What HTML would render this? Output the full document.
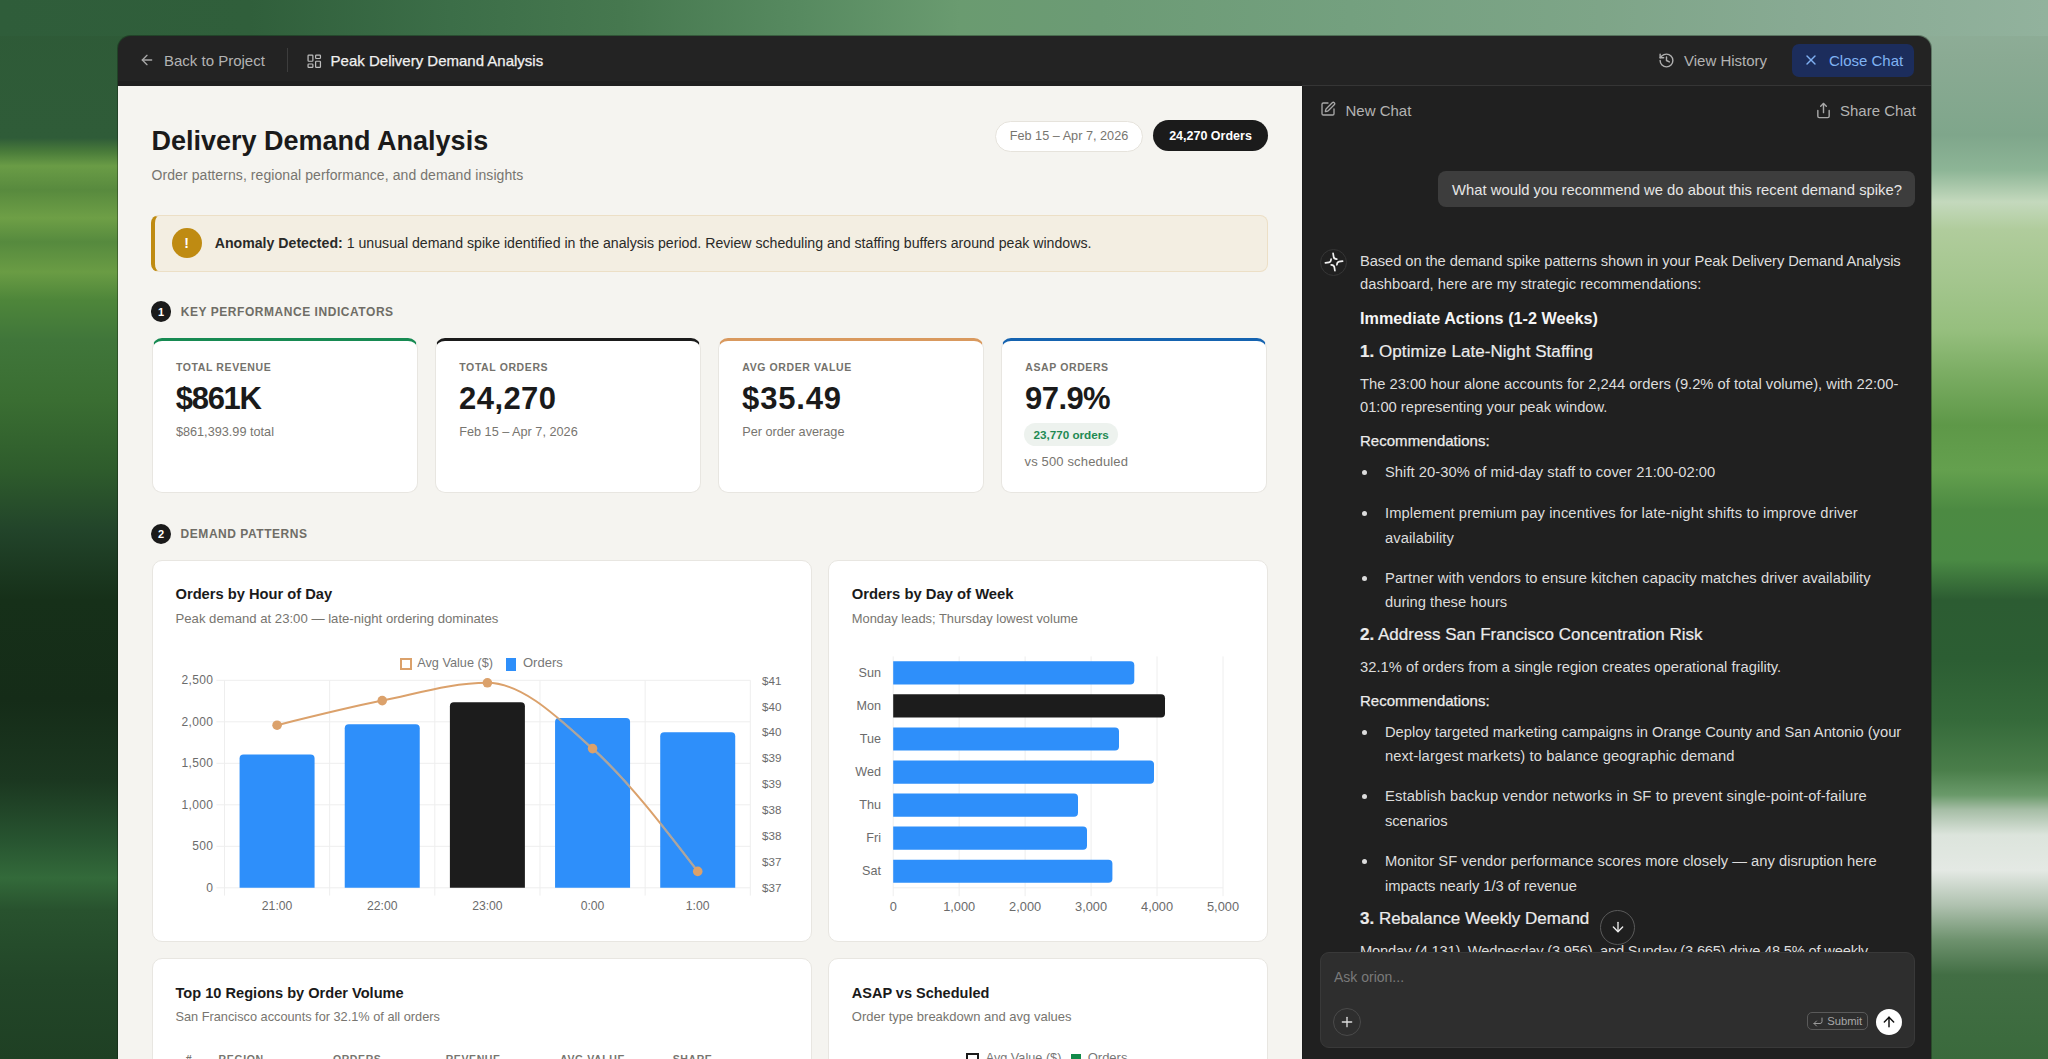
<!DOCTYPE html>
<html><head><meta charset="utf-8"><title>Delivery Demand Analysis</title>
<style>
html,body{margin:0;padding:0;}
body{width:2048px;height:1059px;overflow:hidden;position:relative;font-family:"Liberation Sans", sans-serif;background:#2f5d3a;}
.t{position:absolute;white-space:nowrap;}
.b{position:absolute;}
b{font-weight:700;}
</style></head><body>
<div class="b" style="left:0.00px;top:0.00px;width:150.00px;height:1059.00px;background:linear-gradient(180deg,#2e5a37 0px,#2f5c38 138px,#4a7c3a 152px,#6a9c46 166px,#588a3e 190px,#6e9f46 218px,#568a3e 242px,#6a9c44 272px,#4e863a 300px,#40763a 340px,#3a6e32 400px,#2e5c2c 470px,#22442a 530px,#163019 600px,#152c18 700px,#1b3720 780px,#275430 840px,#336a3a 878px,#28522e 910px,#224628 980px,#1f4024 1059px);"></div>
<div class="b" style="left:1880.00px;top:0.00px;width:168.00px;height:1059.00px;background:linear-gradient(180deg,#92b09b 0px,#8aaa93 60px,#7fa68b 135px,#8db596 170px,#c4d9bd 202px,#b0cc9c 230px,#a4c68e 280px,#96bf7e 330px,#7aac62 375px,#5e9848 425px,#64a04e 470px,#4c8a42 510px,#4a8a44 560px,#2c5c32 600px,#2c5e33 660px,#356a3a 720px,#4a7e4a 770px,#6a9a6a 795px,#a6bea6 810px,#dce4dc 835px,#e4e9e4 870px,#b0c2b0 905px,#6e926e 940px,#426e44 975px,#3a6a3c 1059px);"></div>
<div class="b" style="left:0.00px;top:0.00px;width:2048.00px;height:36.00px;background:linear-gradient(90deg,#2f5d3a 0px,#305f3b 250px,#3c6e48 450px,#46784f 620px,#578a60 800px,#6a9b70 960px,#6c9b75 1100px,#74a07f 1350px,#7ea588 1600px,#88aa93 1800px,#92b29d 2048px);"></div>
<div class="b" style="left:118.00px;top:36.00px;width:1813.00px;height:1023.00px;background:#232323;border-radius:13px 13px 0 0;box-shadow:0 0 0 1px rgba(10,20,10,0.35);"></div>
<div class="b" style="left:118.00px;top:81.00px;width:1184.00px;height:5.00px;background:#1f1f1f;"></div>
<div class="b" style="left:118.00px;top:86.00px;width:1184.00px;height:973.00px;background:#f5f4f0;"></div>
<div class="b" style="left:1302.00px;top:85.00px;width:629.00px;height:974.00px;background:#202020;border-top:1px solid #353535;box-sizing:border-box;"></div>
<div class="b" style="left:1302.00px;top:86.00px;width:1.00px;height:973.00px;background:#1a1a1a;"></div>
<svg class="b" style="left:139px;top:52px;" width="16" height="16" viewBox="0 0 24 24" fill="none" stroke-linecap="round" stroke-linejoin="round"><path d="m12 19-7-7 7-7" stroke="#a8a8a8" stroke-width="2"/><path d="M19 12H5" stroke="#a8a8a8" stroke-width="2"/></svg>
<div class="t" style="left:164.00px;top:51.20px;font-size:15px;line-height:19px;color:#b3b3b3;">Back to Project</div>
<div class="b" style="left:287.00px;top:48.00px;width:1.00px;height:24.00px;background:#3d3d3d;"></div>
<svg class="b" style="left:305.5px;top:52.5px;" width="16.5" height="16.5" viewBox="0 0 24 24" fill="none" stroke-linecap="round" stroke-linejoin="round"><g stroke="#bdbdbd" stroke-width="1.8"><rect x="3" y="3" width="7" height="9" rx="1"/><rect x="14" y="3" width="7" height="5" rx="1"/><rect x="14" y="12" width="7" height="9" rx="1"/><rect x="3" y="16" width="7" height="5" rx="1"/></g></svg>
<div class="t" style="left:330.60px;top:51.00px;font-size:15px;line-height:19px;color:#f0f0f0;-webkit-text-stroke:0.25px #f0f0f0;">Peak Delivery Demand Analysis</div>
<svg class="b" style="left:1658px;top:52px;" width="17" height="17" viewBox="0 0 24 24" fill="none" stroke-linecap="round" stroke-linejoin="round"><g stroke="#b0b0b0" stroke-width="2"><path d="M3 12a9 9 0 1 0 9-9 9.75 9.75 0 0 0-6.74 2.74L3 8"/><path d="M3 3v5h5"/><path d="M12 7v5l4 2"/></g></svg>
<div class="t" style="left:1684.00px;top:51.20px;font-size:15px;line-height:19px;color:#b3b3b3;">View History</div>
<div class="b" style="left:1792.00px;top:44.00px;width:122.00px;height:33.00px;background:#1c2d5c;border-radius:7px;"></div>
<svg class="b" style="left:1803px;top:52px;" width="16" height="16" viewBox="0 0 24 24" fill="none" stroke-linecap="round" stroke-linejoin="round"><g stroke="#7fb0f2" stroke-width="2"><path d="M18 6 6 18"/><path d="m6 6 12 12"/></g></svg>
<div class="t" style="left:1829.00px;top:51.20px;font-size:15px;line-height:19px;color:#80b3f3;">Close Chat</div>
<div class="t" style="left:151.50px;top:123.64px;font-size:27px;line-height:34px;color:#1a1a1a;font-weight:700;">Delivery Demand Analysis</div>
<div class="t" style="left:151.50px;top:165.85px;font-size:14px;line-height:18px;color:#77756f;letter-spacing:0.080px;">Order patterns, regional performance, and demand insights</div>
<div class="b" style="left:995.00px;top:120.50px;width:148.00px;height:31.00px;background:#fff;border:1px solid #e6e3dc;border-radius:16px;box-sizing:border-box;"></div>
<div class="t" style="left:769.00px;width:600px;text-align:center;top:127.60px;font-size:12.7px;line-height:16px;color:#77756f;">Feb 15 – Apr 7, 2026</div>
<div class="b" style="left:1153.00px;top:120.30px;width:115.00px;height:31.00px;background:#1b1b1b;border-radius:16px;"></div>
<div class="t" style="left:910.50px;width:600px;text-align:center;top:127.67px;font-size:12.5px;line-height:16px;color:#ffffff;font-weight:700;">24,270 Orders</div>
<div class="b" style="left:151.00px;top:215.00px;width:1117.00px;height:57.00px;background:#f3eee2;border:1px solid #ecdfc6;border-left:4px solid #bf8b12;border-radius:8px;box-sizing:border-box;"></div>
<div class="b" style="left:171.50px;top:228.00px;width:30.00px;height:30.00px;background:#bf8b12;border-radius:50%;"></div>
<div class="t" style="left:-113.50px;width:600px;text-align:center;top:234.15px;font-size:14px;line-height:18px;color:#ffffff;font-weight:700;">!</div>
<div class="t" style="left:214.70px;top:234.30px;font-size:14.15px;line-height:18px;color:#2a2a28;"><b>Anomaly Detected:</b> 1 unusual demand spike identified in the analysis period. Review scheduling and staffing buffers around peak windows.</div>
<div class="b" style="left:150.80px;top:301.40px;width:20.60px;height:20.60px;background:#1a1a1a;border-radius:50%;"></div>
<div class="t" style="left:-138.90px;width:600px;text-align:center;top:304.79px;font-size:11px;line-height:14px;color:#fff;font-weight:700;">1</div>
<div class="t" style="left:180.70px;top:304.74px;font-size:12px;line-height:15px;color:#6f6d66;font-weight:700;letter-spacing:0.550px;">KEY PERFORMANCE INDICATORS</div>
<div class="b" style="left:151.50px;top:337.50px;width:266.50px;height:155.50px;background:#fff;border:1px solid #e8e6e1;border-top:3.5px solid #178a52;border-radius:10px;box-sizing:border-box;"></div>
<div class="t" style="left:176.00px;top:360.76px;font-size:10.5px;line-height:13px;color:#74726c;font-weight:700;letter-spacing:0.600px;">TOTAL REVENUE</div>
<div class="t" style="left:175.80px;top:379.26px;font-size:31px;line-height:39px;color:#1a1a1a;font-weight:700;letter-spacing:-1.300px;">$861K</div>
<div class="t" style="left:175.90px;top:424.20px;font-size:12.7px;line-height:16px;color:#77756f;">$861,393.99 total</div>
<div class="b" style="left:434.80px;top:337.50px;width:266.50px;height:155.50px;background:#fff;border:1px solid #e8e6e1;border-top:3.5px solid #1b1b1b;border-radius:10px;box-sizing:border-box;"></div>
<div class="t" style="left:459.30px;top:360.76px;font-size:10.5px;line-height:13px;color:#74726c;font-weight:700;letter-spacing:0.600px;">TOTAL ORDERS</div>
<div class="t" style="left:459.10px;top:379.26px;font-size:31px;line-height:39px;color:#1a1a1a;font-weight:700;letter-spacing:0.400px;">24,270</div>
<div class="t" style="left:459.20px;top:424.20px;font-size:12.7px;line-height:16px;color:#77756f;">Feb 15 – Apr 7, 2026</div>
<div class="b" style="left:717.80px;top:337.50px;width:266.50px;height:155.50px;background:#fff;border:1px solid #e8e6e1;border-top:3.5px solid #d9995e;border-radius:10px;box-sizing:border-box;"></div>
<div class="t" style="left:742.30px;top:360.76px;font-size:10.5px;line-height:13px;color:#74726c;font-weight:700;letter-spacing:0.600px;">AVG ORDER VALUE</div>
<div class="t" style="left:742.10px;top:379.26px;font-size:31px;line-height:39px;color:#1a1a1a;font-weight:700;letter-spacing:0.800px;">$35.49</div>
<div class="t" style="left:742.20px;top:424.20px;font-size:12.7px;line-height:16px;color:#77756f;">Per order average</div>
<div class="b" style="left:1000.80px;top:337.50px;width:266.50px;height:155.50px;background:#fff;border:1px solid #e8e6e1;border-top:3.5px solid #1563b0;border-radius:10px;box-sizing:border-box;"></div>
<div class="t" style="left:1025.30px;top:360.76px;font-size:10.5px;line-height:13px;color:#74726c;font-weight:700;letter-spacing:0.600px;">ASAP ORDERS</div>
<div class="t" style="left:1025.10px;top:379.26px;font-size:31px;line-height:39px;color:#1a1a1a;font-weight:700;letter-spacing:-0.600px;">97.9%</div>
<div class="b" style="left:1024.20px;top:423.40px;width:93.80px;height:23.10px;background:#edf2ee;border-radius:12px;"></div>
<div class="t" style="left:771.10px;width:600px;text-align:center;top:427.45px;font-size:11.7px;line-height:15px;color:#1f8a53;font-weight:700;">23,770 orders</div>
<div class="t" style="left:1024.50px;top:454.10px;font-size:13px;line-height:16px;color:#77756f;letter-spacing:0.150px;">vs 500 scheduled</div>
<div class="b" style="left:150.80px;top:523.70px;width:20.60px;height:20.60px;background:#1a1a1a;border-radius:50%;"></div>
<div class="t" style="left:-138.90px;width:600px;text-align:center;top:527.19px;font-size:11px;line-height:14px;color:#fff;font-weight:700;">2</div>
<div class="t" style="left:180.60px;top:526.64px;font-size:12px;line-height:15px;color:#6f6d66;font-weight:700;letter-spacing:0.540px;">DEMAND PATTERNS</div>
<div class="b" style="left:151.50px;top:560.00px;width:660.50px;height:382.00px;background:#fff;border:1px solid #e8e6e1;border-radius:10px;box-sizing:border-box;"></div>
<div class="b" style="left:827.50px;top:560.00px;width:440.50px;height:382.00px;background:#fff;border:1px solid #e8e6e1;border-radius:10px;box-sizing:border-box;"></div>
<div class="b" style="left:151.50px;top:958.00px;width:660.50px;height:142.00px;background:#fff;border:1px solid #e8e6e1;border-radius:10px;box-sizing:border-box;"></div>
<div class="b" style="left:827.50px;top:958.00px;width:440.50px;height:142.00px;background:#fff;border:1px solid #e8e6e1;border-radius:10px;box-sizing:border-box;"></div>
<div class="t" style="left:175.50px;top:585.21px;font-size:14.7px;line-height:18px;color:#1a1a1a;font-weight:700;">Orders by Hour of Day</div>
<div class="t" style="left:175.50px;top:610.74px;font-size:13.15px;line-height:16px;color:#77756f;">Peak demand at 23:00 — late-night ordering dominates</div>
<div class="t" style="left:851.80px;top:585.17px;font-size:14.8px;line-height:18px;color:#1a1a1a;font-weight:700;">Orders by Day of Week</div>
<div class="t" style="left:851.80px;top:610.83px;font-size:12.9px;line-height:16px;color:#77756f;">Monday leads; Thursday lowest volume</div>
<div class="t" style="left:175.50px;top:983.54px;font-size:14.6px;line-height:18px;color:#1a1a1a;font-weight:700;">Top 10 Regions by Order Volume</div>
<div class="t" style="left:175.50px;top:1009.08px;font-size:12.76px;line-height:16px;color:#77756f;">San Francisco accounts for 32.1% of all orders</div>
<div class="t" style="left:851.80px;top:983.58px;font-size:14.5px;line-height:18px;color:#1a1a1a;font-weight:700;">ASAP vs Scheduled</div>
<div class="t" style="left:851.80px;top:1009.00px;font-size:13px;line-height:16px;color:#77756f;">Order type breakdown and avg values</div>
<div class="t" style="left:185.80px;top:1052.86px;font-size:10.5px;line-height:13px;color:#77756f;font-weight:700;letter-spacing:0.600px;">#</div>
<div class="t" style="left:218.60px;top:1052.86px;font-size:10.5px;line-height:13px;color:#77756f;font-weight:700;letter-spacing:0.600px;">REGION</div>
<div class="t" style="left:332.90px;top:1052.86px;font-size:10.5px;line-height:13px;color:#77756f;font-weight:700;letter-spacing:0.600px;">ORDERS</div>
<div class="t" style="left:445.70px;top:1052.86px;font-size:10.5px;line-height:13px;color:#77756f;font-weight:700;letter-spacing:0.600px;">REVENUE</div>
<div class="t" style="left:560.00px;top:1052.86px;font-size:10.5px;line-height:13px;color:#77756f;font-weight:700;letter-spacing:0.600px;">AVG VALUE</div>
<div class="t" style="left:672.70px;top:1052.86px;font-size:10.5px;line-height:13px;color:#77756f;font-weight:700;letter-spacing:0.600px;">SHARE</div>
<div class="b" style="left:966.30px;top:1052.70px;width:12.40px;height:12.30px;border:2px solid #1a1a1a;box-sizing:border-box;"></div>
<div class="t" style="left:985.70px;top:1050.10px;font-size:12.7px;line-height:16px;color:#777;">Avg Value ($)</div>
<div class="b" style="left:1071.00px;top:1053.80px;width:9.70px;height:11.20px;background:#128a4a;"></div>
<div class="t" style="left:1087.70px;top:1050.00px;font-size:13px;line-height:16px;color:#777;">Orders</div>
<svg class="b" style="left:0;top:0" width="2048" height="1059" viewBox="0 0 2048 1059"><line x1="216.4" y1="887.8" x2="750.3" y2="887.8" stroke="#eeeeee" stroke-width="1"/><line x1="216.4" y1="846.3" x2="750.3" y2="846.3" stroke="#eeeeee" stroke-width="1"/><line x1="216.4" y1="804.8" x2="750.3" y2="804.8" stroke="#eeeeee" stroke-width="1"/><line x1="216.4" y1="763.3" x2="750.3" y2="763.3" stroke="#eeeeee" stroke-width="1"/><line x1="216.4" y1="721.8" x2="750.3" y2="721.8" stroke="#eeeeee" stroke-width="1"/><line x1="216.4" y1="680.3" x2="750.3" y2="680.3" stroke="#eeeeee" stroke-width="1"/><line x1="224.5" y1="680.3" x2="224.5" y2="895.6" stroke="#eeeeee" stroke-width="1"/><line x1="329.65999999999997" y1="680.3" x2="329.65999999999997" y2="895.6" stroke="#eeeeee" stroke-width="1"/><line x1="434.82" y1="680.3" x2="434.82" y2="895.6" stroke="#eeeeee" stroke-width="1"/><line x1="539.98" y1="680.3" x2="539.98" y2="895.6" stroke="#eeeeee" stroke-width="1"/><line x1="645.14" y1="680.3" x2="645.14" y2="895.6" stroke="#eeeeee" stroke-width="1"/><line x1="750.3" y1="680.3" x2="750.3" y2="895.6" stroke="#eeeeee" stroke-width="1"/><path d="M239.57999999999998,887.8 L239.57999999999998,758.5 Q239.57999999999998,754.5 243.57999999999998,754.5 L310.58,754.5 Q314.58,754.5 314.58,758.5 L314.58,887.8 Z" fill="#2e8ffa"/><path d="M344.74,887.8 L344.74,728.2 Q344.74,724.2 348.74,724.2 L415.74,724.2 Q419.74,724.2 419.74,728.2 L419.74,887.8 Z" fill="#2e8ffa"/><path d="M449.9,887.8 L449.9,706.3 Q449.9,702.3 453.9,702.3 L520.9,702.3 Q524.9,702.3 524.9,706.3 L524.9,887.8 Z" fill="#1c1c1c"/><path d="M555.06,887.8 L555.06,722 Q555.06,718 559.06,718 L626.06,718 Q630.06,718 630.06,722 L630.06,887.8 Z" fill="#2e8ffa"/><path d="M660.22,887.8 L660.22,736.2 Q660.22,732.2 664.22,732.2 L731.22,732.2 Q735.22,732.2 735.22,736.2 L735.22,887.8 Z" fill="#2e8ffa"/><defs><clipPath id="bc"><rect x="239.57999999999998" y="754.5" width="75" height="133.29999999999995"/><rect x="344.74" y="724.2" width="75" height="163.5999999999999"/><rect x="449.9" y="702.3" width="75" height="185.5"/><rect x="555.06" y="718" width="75" height="169.79999999999995"/><rect x="660.22" y="732.2" width="75" height="155.5999999999999"/></clipPath></defs><path d="M277.08,725.20 C312.13,716.43 347.19,707.67 382.24,700.60 C417.29,693.53 452.35,682.80 487.40,682.80 C522.45,682.80 557.51,717.17 592.56,748.60 C627.61,780.03 662.67,825.72 697.72,871.40" fill="none" stroke="#dba16b" stroke-width="2"/><path d="M277.08,725.20 C312.13,716.43 347.19,707.67 382.24,700.60 C417.29,693.53 452.35,682.80 487.40,682.80 C522.45,682.80 557.51,717.17 592.56,748.60 C627.61,780.03 662.67,825.72 697.72,871.40" fill="none" stroke="#a9a6a3" stroke-width="2" clip-path="url(#bc)"/><circle cx="277.08" cy="725.2" r="4.8" fill="#dba16b"/><circle cx="382.24" cy="700.6" r="4.8" fill="#dba16b"/><circle cx="487.4" cy="682.8" r="4.8" fill="#dba16b"/><circle cx="592.56" cy="748.6" r="4.8" fill="#dba16b"/><circle cx="697.72" cy="871.4" r="4.8" fill="#dba16b"/></svg>
<div class="t" style="right:1834.90px;text-align:right;top:880.54px;font-size:12px;line-height:15px;color:#6b6b6b;letter-spacing:0.300px;">0</div>
<div class="t" style="right:1834.90px;text-align:right;top:839.04px;font-size:12px;line-height:15px;color:#6b6b6b;letter-spacing:0.300px;">500</div>
<div class="t" style="right:1834.90px;text-align:right;top:797.54px;font-size:12px;line-height:15px;color:#6b6b6b;letter-spacing:0.300px;">1,000</div>
<div class="t" style="right:1834.90px;text-align:right;top:756.04px;font-size:12px;line-height:15px;color:#6b6b6b;letter-spacing:0.300px;">1,500</div>
<div class="t" style="right:1834.90px;text-align:right;top:714.54px;font-size:12px;line-height:15px;color:#6b6b6b;letter-spacing:0.300px;">2,000</div>
<div class="t" style="right:1834.90px;text-align:right;top:673.04px;font-size:12px;line-height:15px;color:#6b6b6b;letter-spacing:0.300px;">2,500</div>
<div class="t" style="left:762.00px;top:673.58px;font-size:11.6px;line-height:14px;color:#6b6b6b;">$41</div>
<div class="t" style="left:762.00px;top:699.52px;font-size:11.6px;line-height:14px;color:#6b6b6b;">$40</div>
<div class="t" style="left:762.00px;top:725.46px;font-size:11.6px;line-height:14px;color:#6b6b6b;">$40</div>
<div class="t" style="left:762.00px;top:751.40px;font-size:11.6px;line-height:14px;color:#6b6b6b;">$39</div>
<div class="t" style="left:762.00px;top:777.34px;font-size:11.6px;line-height:14px;color:#6b6b6b;">$39</div>
<div class="t" style="left:762.00px;top:803.28px;font-size:11.6px;line-height:14px;color:#6b6b6b;">$38</div>
<div class="t" style="left:762.00px;top:829.22px;font-size:11.6px;line-height:14px;color:#6b6b6b;">$38</div>
<div class="t" style="left:762.00px;top:855.16px;font-size:11.6px;line-height:14px;color:#6b6b6b;">$37</div>
<div class="t" style="left:762.00px;top:881.10px;font-size:11.6px;line-height:14px;color:#6b6b6b;">$37</div>
<div class="t" style="left:-22.92px;width:600px;text-align:center;top:899.27px;font-size:12.2px;line-height:15px;color:#6b6b6b;">21:00</div>
<div class="t" style="left:82.24px;width:600px;text-align:center;top:899.27px;font-size:12.2px;line-height:15px;color:#6b6b6b;">22:00</div>
<div class="t" style="left:187.40px;width:600px;text-align:center;top:899.27px;font-size:12.2px;line-height:15px;color:#6b6b6b;">23:00</div>
<div class="t" style="left:292.56px;width:600px;text-align:center;top:899.27px;font-size:12.2px;line-height:15px;color:#6b6b6b;">0:00</div>
<div class="t" style="left:397.72px;width:600px;text-align:center;top:899.27px;font-size:12.2px;line-height:15px;color:#6b6b6b;">1:00</div>
<div class="b" style="left:399.80px;top:657.60px;width:12.00px;height:12.80px;border:2px solid #dba16b;box-sizing:border-box;"></div>
<div class="t" style="left:417.30px;top:655.00px;font-size:12.7px;line-height:16px;color:#777;">Avg Value ($)</div>
<div class="b" style="left:506.20px;top:658.00px;width:10.00px;height:12.50px;background:#2e8ffa;"></div>
<div class="t" style="left:523.00px;top:654.90px;font-size:13px;line-height:16px;color:#777;">Orders</div>
<svg class="b" style="left:0;top:0" width="2048" height="1059" viewBox="0 0 2048 1059"><line x1="893.2" y1="656.4" x2="893.2" y2="896.2" stroke="#eeeeee" stroke-width="1"/><line x1="959.1600000000001" y1="656.4" x2="959.1600000000001" y2="896.2" stroke="#eeeeee" stroke-width="1"/><line x1="1025.1200000000001" y1="656.4" x2="1025.1200000000001" y2="896.2" stroke="#eeeeee" stroke-width="1"/><line x1="1091.08" y1="656.4" x2="1091.08" y2="896.2" stroke="#eeeeee" stroke-width="1"/><line x1="1157.04" y1="656.4" x2="1157.04" y2="896.2" stroke="#eeeeee" stroke-width="1"/><line x1="1223.0" y1="656.4" x2="1223.0" y2="896.2" stroke="#eeeeee" stroke-width="1"/><line x1="893.2" y1="887.8" x2="1223.0" y2="887.8" stroke="#eeeeee" stroke-width="1"/><path d="M893.2,661.3 L1130.3,661.3 Q1134.3,661.3 1134.3,665.3 L1134.3,680.5 Q1134.3,684.5 1130.3,684.5 L893.2,684.5 Z" fill="#2e8ffa"/><path d="M893.2,694.3571428571428 L1161,694.3571428571428 Q1165,694.3571428571428 1165,698.3571428571428 L1165,713.5571428571428 Q1165,717.5571428571428 1161,717.5571428571428 L893.2,717.5571428571428 Z" fill="#1c1c1c"/><path d="M893.2,727.4142857142857 L1115,727.4142857142857 Q1119,727.4142857142857 1119,731.4142857142857 L1119,746.6142857142858 Q1119,750.6142857142858 1115,750.6142857142858 L893.2,750.6142857142858 Z" fill="#2e8ffa"/><path d="M893.2,760.4714285714285 L1150,760.4714285714285 Q1154,760.4714285714285 1154,764.4714285714285 L1154,779.6714285714286 Q1154,783.6714285714286 1150,783.6714285714286 L893.2,783.6714285714286 Z" fill="#2e8ffa"/><path d="M893.2,793.5285714285714 L1074,793.5285714285714 Q1078,793.5285714285714 1078,797.5285714285714 L1078,812.7285714285714 Q1078,816.7285714285714 1074,816.7285714285714 L893.2,816.7285714285714 Z" fill="#2e8ffa"/><path d="M893.2,826.5857142857143 L1083,826.5857142857143 Q1087,826.5857142857143 1087,830.5857142857143 L1087,845.7857142857143 Q1087,849.7857142857143 1083,849.7857142857143 L893.2,849.7857142857143 Z" fill="#2e8ffa"/><path d="M893.2,859.6428571428571 L1108.4,859.6428571428571 Q1112.4,859.6428571428571 1112.4,863.6428571428571 L1112.4,878.8428571428572 Q1112.4,882.8428571428572 1108.4,882.8428571428572 L893.2,882.8428571428572 Z" fill="#2e8ffa"/></svg>
<div class="t" style="right:1167.00px;text-align:right;top:665.06px;font-size:12.6px;line-height:16px;color:#6b6b6b;">Sun</div>
<div class="t" style="right:1167.00px;text-align:right;top:698.12px;font-size:12.6px;line-height:16px;color:#6b6b6b;">Mon</div>
<div class="t" style="right:1167.00px;text-align:right;top:731.18px;font-size:12.6px;line-height:16px;color:#6b6b6b;">Tue</div>
<div class="t" style="right:1167.00px;text-align:right;top:764.23px;font-size:12.6px;line-height:16px;color:#6b6b6b;">Wed</div>
<div class="t" style="right:1167.00px;text-align:right;top:797.29px;font-size:12.6px;line-height:16px;color:#6b6b6b;">Thu</div>
<div class="t" style="right:1167.00px;text-align:right;top:830.35px;font-size:12.6px;line-height:16px;color:#6b6b6b;">Fri</div>
<div class="t" style="right:1167.00px;text-align:right;top:863.41px;font-size:12.6px;line-height:16px;color:#6b6b6b;">Sat</div>
<div class="t" style="left:593.20px;width:600px;text-align:center;top:898.56px;font-size:12.8px;line-height:16px;color:#6b6b6b;">0</div>
<div class="t" style="left:659.16px;width:600px;text-align:center;top:898.56px;font-size:12.8px;line-height:16px;color:#6b6b6b;">1,000</div>
<div class="t" style="left:725.12px;width:600px;text-align:center;top:898.56px;font-size:12.8px;line-height:16px;color:#6b6b6b;">2,000</div>
<div class="t" style="left:791.08px;width:600px;text-align:center;top:898.56px;font-size:12.8px;line-height:16px;color:#6b6b6b;">3,000</div>
<div class="t" style="left:857.04px;width:600px;text-align:center;top:898.56px;font-size:12.8px;line-height:16px;color:#6b6b6b;">4,000</div>
<div class="t" style="left:923.00px;width:600px;text-align:center;top:898.56px;font-size:12.8px;line-height:16px;color:#6b6b6b;">5,000</div>
<svg class="b" style="left:1320px;top:101px;" width="16" height="16" viewBox="0 0 24 24" fill="none" stroke-linecap="round" stroke-linejoin="round"><g stroke="#a8a8a8" stroke-width="2"><path d="M12 3H5a2 2 0 0 0-2 2v14a2 2 0 0 0 2 2h14a2 2 0 0 0 2-2v-7"/><path d="M18.375 2.625a1 1 0 0 1 3 3l-9.013 9.014a2 2 0 0 1-.853.505l-2.873.84a.5.5 0 0 1-.62-.62l.84-2.873a2 2 0 0 1 .506-.852z"/></g></svg>
<div class="t" style="left:1345.50px;top:100.90px;font-size:15px;line-height:19px;color:#b3b3b3;">New Chat</div>
<svg class="b" style="left:1815px;top:101.5px;" width="17" height="17" viewBox="0 0 24 24" fill="none" stroke-linecap="round" stroke-linejoin="round"><g stroke="#a8a8a8" stroke-width="2"><path d="M12 2v13"/><path d="m16 6-4-4-4 4"/><path d="M4 12v8a2 2 0 0 0 2 2h12a2 2 0 0 0 2-2v-8"/></g></svg>
<div class="t" style="left:1840.00px;top:101.00px;font-size:15px;line-height:19px;color:#b3b3b3;">Share Chat</div>
<div class="b" style="left:1438.00px;top:170.50px;width:477.00px;height:36.50px;background:#3d3d3d;border-radius:8px;"></div>
<div class="t" style="left:1452.00px;top:180.77px;font-size:14.8px;line-height:18px;color:#e6e6e6;letter-spacing:0.015px;">What would you recommend we do about this recent demand spike?</div>
<div class="b" style="left:1320.00px;top:248.50px;width:27.00px;height:27.00px;border:1px solid #363636;border-radius:50%;box-sizing:border-box;"></div>
<svg class="b" style="left:1313.5px;top:242px" width="40" height="40" viewBox="-20 -20 40 40"><g transform="rotate(0)"><path d="M-0.9,-8.6 L-0.3,-5 Q0,-3.1 2.8,-2.9" stroke="#f0f0f0" stroke-width="1.7" fill="none" stroke-linecap="round"/></g><g transform="rotate(90)"><path d="M-0.9,-8.6 L-0.3,-5 Q0,-3.1 2.8,-2.9" stroke="#f0f0f0" stroke-width="1.7" fill="none" stroke-linecap="round"/></g><g transform="rotate(180)"><path d="M-0.9,-8.6 L-0.3,-5 Q0,-3.1 2.8,-2.9" stroke="#f0f0f0" stroke-width="1.7" fill="none" stroke-linecap="round"/></g><g transform="rotate(270)"><path d="M-0.9,-8.6 L-0.3,-5 Q0,-3.1 2.8,-2.9" stroke="#f0f0f0" stroke-width="1.7" fill="none" stroke-linecap="round"/></g></svg>
<div class="t" style="left:1360.00px;top:251.69px;font-size:14.75px;line-height:18px;color:#dcdcdc;letter-spacing:-0.101px;">Based on the demand spike patterns shown in your Peak Delivery Demand Analysis</div>
<div class="t" style="left:1360.00px;top:275.39px;font-size:14.75px;line-height:18px;color:#dcdcdc;letter-spacing:-0.012px;">dashboard, here are my strategic recommendations:</div>
<div class="t" style="left:1360.00px;top:307.69px;font-size:16.2px;line-height:20px;color:#f5f5f5;font-weight:700;letter-spacing:0.017px;">Immediate Actions (1-2 Weeks)</div>
<div class="t" style="left:1360.00px;top:340.61px;font-size:17px;line-height:21px;color:#ececec;letter-spacing:0.058px;-webkit-text-stroke:0.2px #ececec;"><b>1.</b> Optimize Late-Night Staffing</div>
<div class="t" style="left:1360.00px;top:374.59px;font-size:14.75px;line-height:18px;color:#dcdcdc;letter-spacing:-0.015px;">The 23:00 hour alone accounts for 2,244 orders (9.2% of total volume), with 22:00-</div>
<div class="t" style="left:1360.00px;top:398.39px;font-size:14.75px;line-height:18px;color:#dcdcdc;letter-spacing:-0.029px;">01:00 representing your peak window.</div>
<div class="t" style="left:1360.00px;top:430.80px;font-size:15px;line-height:19px;color:#ececec;letter-spacing:0.023px;-webkit-text-stroke:0.25px #ececec;">Recommendations:</div>
<div class="b" style="left:1362.10px;top:470.40px;width:5.00px;height:5.00px;background:#dcdcdc;border-radius:50%;"></div>
<div class="t" style="left:1385.00px;top:463.49px;font-size:14.75px;line-height:18px;color:#dcdcdc;letter-spacing:0.036px;">Shift 20-30% of mid-day staff to cover 21:00-02:00</div>
<div class="b" style="left:1362.10px;top:511.00px;width:5.00px;height:5.00px;background:#dcdcdc;border-radius:50%;"></div>
<div class="t" style="left:1385.00px;top:504.09px;font-size:14.75px;line-height:18px;color:#dcdcdc;letter-spacing:0.088px;">Implement premium pay incentives for late-night shifts to improve driver</div>
<div class="t" style="left:1385.00px;top:528.69px;font-size:14.75px;line-height:18px;color:#dcdcdc;letter-spacing:0.079px;">availability</div>
<div class="b" style="left:1362.10px;top:575.70px;width:5.00px;height:5.00px;background:#dcdcdc;border-radius:50%;"></div>
<div class="t" style="left:1385.00px;top:568.79px;font-size:14.75px;line-height:18px;color:#dcdcdc;letter-spacing:0.037px;">Partner with vendors to ensure kitchen capacity matches driver availability</div>
<div class="t" style="left:1385.00px;top:592.89px;font-size:14.75px;line-height:18px;color:#dcdcdc;letter-spacing:0.001px;">during these hours</div>
<div class="t" style="left:1360.00px;top:624.11px;font-size:17px;line-height:21px;color:#ececec;letter-spacing:0.010px;-webkit-text-stroke:0.2px #ececec;"><b>2.</b> Address San Francisco Concentration Risk</div>
<div class="t" style="left:1360.00px;top:658.49px;font-size:14.75px;line-height:18px;color:#dcdcdc;letter-spacing:0.001px;">32.1% of orders from a single region creates operational fragility.</div>
<div class="t" style="left:1360.00px;top:690.60px;font-size:15px;line-height:19px;color:#ececec;letter-spacing:0.023px;-webkit-text-stroke:0.25px #ececec;">Recommendations:</div>
<div class="b" style="left:1362.10px;top:730.20px;width:5.00px;height:5.00px;background:#dcdcdc;border-radius:50%;"></div>
<div class="t" style="left:1385.00px;top:723.29px;font-size:14.75px;line-height:18px;color:#dcdcdc;letter-spacing:-0.027px;">Deploy targeted marketing campaigns in Orange County and San Antonio (your</div>
<div class="t" style="left:1385.00px;top:747.29px;font-size:14.75px;line-height:18px;color:#dcdcdc;letter-spacing:0.088px;">next-largest markets) to balance geographic demand</div>
<div class="b" style="left:1362.10px;top:793.90px;width:5.00px;height:5.00px;background:#dcdcdc;border-radius:50%;"></div>
<div class="t" style="left:1385.00px;top:786.99px;font-size:14.75px;line-height:18px;color:#dcdcdc;letter-spacing:0.108px;">Establish backup vendor networks in SF to prevent single-point-of-failure</div>
<div class="t" style="left:1385.00px;top:811.59px;font-size:14.75px;line-height:18px;color:#dcdcdc;letter-spacing:-0.071px;">scenarios</div>
<div class="b" style="left:1362.10px;top:859.30px;width:5.00px;height:5.00px;background:#dcdcdc;border-radius:50%;"></div>
<div class="t" style="left:1385.00px;top:852.39px;font-size:14.75px;line-height:18px;color:#dcdcdc;letter-spacing:0.008px;">Monitor SF vendor performance scores more closely — any disruption here</div>
<div class="t" style="left:1385.00px;top:876.89px;font-size:14.75px;line-height:18px;color:#dcdcdc;letter-spacing:-0.059px;">impacts nearly 1/3 of revenue</div>
<div class="t" style="left:1360.00px;top:908.31px;font-size:17px;line-height:21px;color:#ececec;letter-spacing:-0.001px;-webkit-text-stroke:0.2px #ececec;"><b>3.</b> Rebalance Weekly Demand</div>
<div class="t" style="left:1360.00px;top:942.39px;font-size:14.75px;line-height:18px;color:#dcdcdc;letter-spacing:-0.231px;">Monday (4,131), Wednesday (3,956), and Sunday (3,665) drive 48.5% of weekly</div>
<div class="b" style="left:1600.00px;top:909.80px;width:35.00px;height:35.00px;border:1px solid #5a5a5a;border-radius:50%;box-sizing:border-box;background:rgba(32,32,32,0.6);"></div>
<svg class="b" style="left:1609.5px;top:919.3px;" width="16" height="16" viewBox="0 0 24 24" fill="none" stroke-linecap="round" stroke-linejoin="round"><g stroke="#f0f0f0" stroke-width="2"><path d="M12 5v14"/><path d="m19 12-7 7-7-7"/></g></svg>
<div class="b" style="left:1320.30px;top:952.00px;width:594.70px;height:96.40px;background:#2e2e2e;border:1px solid #393939;border-radius:9px;box-sizing:border-box;"></div>
<div class="t" style="left:1334.00px;top:968.15px;font-size:14px;line-height:18px;color:#7a7a7a;">Ask orion...</div>
<div class="b" style="left:1333.00px;top:1007.50px;width:28.00px;height:28.00px;border:1px solid #4a4a4a;border-radius:50%;box-sizing:border-box;"></div>
<svg class="b" style="left:1339px;top:1013.5px;" width="16" height="16" viewBox="0 0 24 24" fill="none" stroke-linecap="round" stroke-linejoin="round"><g stroke="#dddddd" stroke-width="2"><path d="M5 12h14"/><path d="M12 5v14"/></g></svg>
<div class="b" style="left:1807.00px;top:1012.40px;width:61.00px;height:17.80px;border:1px solid #5a5a5a;border-radius:5px;box-sizing:border-box;"></div>
<svg class="b" style="left:1811.5px;top:1015.5px;" width="12" height="12" viewBox="0 0 24 24" fill="none" stroke-linecap="round" stroke-linejoin="round"><g stroke="#9a9a9a" stroke-width="2"><path d="M20 4v7a4 4 0 0 1-4 4H4"/><path d="m9 10-5 5 5 5"/></g></svg>
<div class="t" style="left:1827.20px;top:1014.10px;font-size:11.25px;line-height:14px;color:#a8a8a8;">Submit</div>
<div class="b" style="left:1876.00px;top:1008.60px;width:26.00px;height:26.00px;background:#ffffff;border-radius:50%;"></div>
<svg class="b" style="left:1881px;top:1013.6px;" width="16" height="16" viewBox="0 0 24 24" fill="none" stroke-linecap="round" stroke-linejoin="round"><g stroke="#111" stroke-width="2.2"><path d="m5 12 7-7 7 7"/><path d="M12 19V5"/></g></svg>
</body></html>
